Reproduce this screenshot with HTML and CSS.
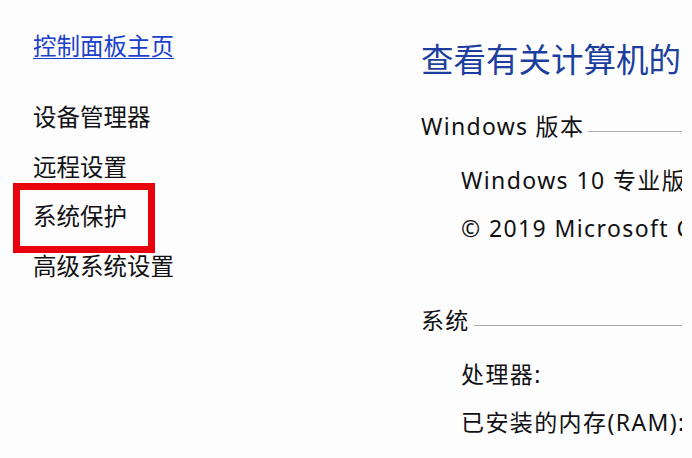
FILE: index.html
```html
<!DOCTYPE html>
<html lang="zh-CN">
<head>
<meta charset="utf-8">
<title>系统</title>
<link rel="stylesheet" href="styles.css">
</head>
<body>
<div class="window">
  <nav class="sidebar">
    <a class="home" href="#">控制面板主页</a>
    <ul class="tasks">
      <li>设备管理器</li>
      <li>远程设置</li>
      <li class="marked">系统保护</li>
      <li>高级系统设置</li>
    </ul>
  </nav>
  <main class="content">
    <h1 class="title">查看有关计算机的基本信息</h1>
    <section class="group">
      <div class="group-title"><span>Windows 版本</span><span class="rule"></span></div>
      <div class="row">Windows 10 专业版</div>
      <div class="row">© 2019 Microsoft Corporation。保留所有权利。</div>
    </section>
    <section class="group group-system">
      <div class="group-title"><span>系统</span><span class="rule"></span></div>
      <div class="row">处理器:</div>
      <div class="row">已安装的内存(RAM):</div>
    </section>
  </main>
</div>
</body>
</html>
```

FILE: styles.css
```css
html, body {
  margin: 0;
  padding: 0;
  background: #fdfdfd;
}

body {
  font-family: "Noto Sans", "Noto Sans CJK SC", sans-serif;
  color: #111114;
  width: 692px;
  height: 458px;
  overflow: hidden;
}

.window {
  display: grid;
  grid-template-columns: 421px 261px;
  width: 682px;
  height: 458px;
  overflow: hidden;
}

.sidebar {
  padding: 34px 0 0 33px;
}

.home {
  display: block;
  font-size: 23.5px;
  line-height: 24px;
  color: #1a40cc;
  text-decoration: underline;
  text-underline-offset: 3px;
  text-decoration-thickness: 1px;
  white-space: nowrap;
}

.tasks {
  list-style: none;
  margin: 35px 0 0;
  padding: 0;
}

.tasks li {
  font-size: 23.5px;
  line-height: 49.5px;
  white-space: nowrap;
}

.marked {
  position: relative;
}

.marked::after {
  content: "";
  position: absolute;
  left: -20px;
  top: -9px;
  width: 128px;
  height: 56px;
  border: 7px solid #e8000d;
}

.content {
  padding-top: 40px;
  overflow: hidden;
  min-width: 0;
}

.title {
  margin: 0;
  font-size: 32.5px;
  line-height: 40px;
  font-weight: 400;
  color: #1c3e9e;
  white-space: nowrap;
}

.group {
  margin-top: 31px;
}

.group-system {
  margin-top: 53px;
}

.group-title {
  display: flex;
  align-items: flex-start;
  font-size: 23px;
  line-height: 30px;
  letter-spacing: 1.3px;
  white-space: nowrap;
  margin-bottom: 15px;
}

.rule {
  flex: 1;
  height: 1px;
  margin: 20px 0 0 4px;
  background: #a9a9ad;
}

.row {
  padding-left: 40px;
  font-size: 23px;
  line-height: 48px;
  letter-spacing: 1.4px;
  white-space: nowrap;
}
```
